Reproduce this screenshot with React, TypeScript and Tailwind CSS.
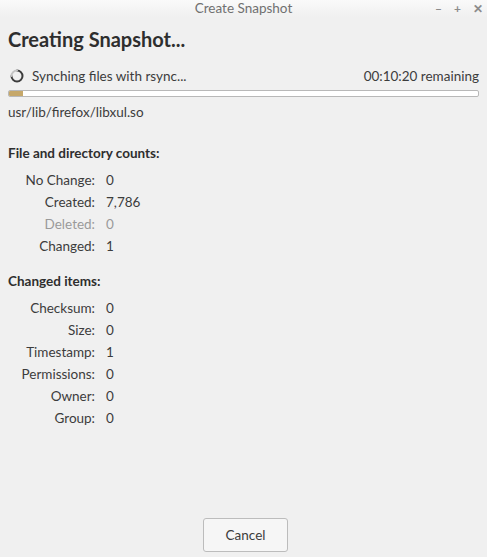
import React from 'react';

const counts = [
  { label: 'No Change:', value: '0' },
  { label: 'Created:', value: '7,786' },
  { label: 'Deleted:', value: '0', dim: true },
  { label: 'Changed:', value: '1' },
];

const changed = [
  { label: 'Checksum:', value: '0' },
  { label: 'Size:', value: '0' },
  { label: 'Timestamp:', value: '1' },
  { label: 'Permissions:', value: '0' },
  { label: 'Owner:', value: '0' },
  { label: 'Group:', value: '0' },
];

const StatRows = ({ rows }: { rows: { label: string; value: string; dim?: boolean }[] }) => (
  <div className="grid grid-cols-[87px_auto] gap-x-[11px] gap-y-[5px] mt-[10px]">
    {rows.map((r) => (
      <React.Fragment key={r.label}>
        <span className={`text-right h-[17px] leading-[17px] ${r.dim ? 'text-[#9a9a9a]' : ''}`}>{r.label}</span>
        <span className={`h-[17px] leading-[17px] ${r.dim ? 'text-[#9a9a9a]' : ''}`}>{r.value}</span>
      </React.Fragment>
    ))}
  </div>
);

const Spinner = () => (
  <svg width="14" height="14" viewBox="0 0 14 14" className="shrink-0">
    <path d="M7 1.5 A5.5 5.5 0 1 1 1.5 7" fill="none" stroke="#3c3c3c" strokeWidth="2" strokeLinecap="round" />
    <path d="M1.5 7 A5.5 5.5 0 0 1 7 1.5" fill="none" stroke="#c4c4c4" strokeWidth="2" strokeLinecap="round" />
  </svg>
);

export default function App() {
  return (
    <div
      className="w-[487px] h-[557px] bg-[#f0f0f0] text-[#3c3c3c] text-[13.5px] flex flex-col"
      style={{ fontFamily: "Lato, 'Noto Sans', sans-serif" }}
    >
      <div className="h-[17px] bg-gradient-to-b from-[#fafafa] to-[#f0f0f0] flex items-center relative shrink-0">
        <div className="flex-1 text-center text-[#707070] text-[13.5px] leading-[17px]">Create Snapshot</div>
        <div className="absolute right-[4px] top-0 h-[17px] flex items-center gap-[12px] text-[#8c8c8c] text-[12px] font-bold">
          <span>–</span>
          <span>+</span>
          <span>✕</span>
        </div>
      </div>

      <div className="flex-1 flex flex-col px-[8px]">
        <h1 className="text-[20px] font-bold text-[#2e2e2e] mt-[9px] leading-[26px]">Creating Snapshot...</h1>

        <div className="flex items-center gap-[8px] mt-[15px] pl-[2px] h-[18px]">
          <Spinner />
          <span className="flex-1">Synching files with rsync...</span>
          <span>00:10:20 remaining</span>
        </div>

        <div className="mt-[5px] h-[7px] rounded-[2px] border border-[#b8b8b8] bg-white overflow-hidden">
          <div className="h-full w-[14px] bg-[#c6a86a]" />
        </div>

        <div className="mt-[6px] leading-[18px]">usr/lib/firefox/libxul.so</div>

        <div className="font-bold text-[#2e2e2e] mt-[23px] leading-[18px]">File and directory counts:</div>
        <StatRows rows={counts} />

        <div className="font-bold text-[#2e2e2e] mt-[17px] leading-[18px]">Changed items:</div>
        <StatRows rows={changed} />

        <div className="flex-1" />
        <div className="flex justify-center pl-[4px] mb-[5px]">
          <button className="w-[85px] h-[34px] rounded-[3px] border border-[#bcbcbc] bg-[#f6f6f6] text-[#3c3c3c] text-[13.5px]">
            Cancel
          </button>
        </div>
      </div>
    </div>
  );
}
